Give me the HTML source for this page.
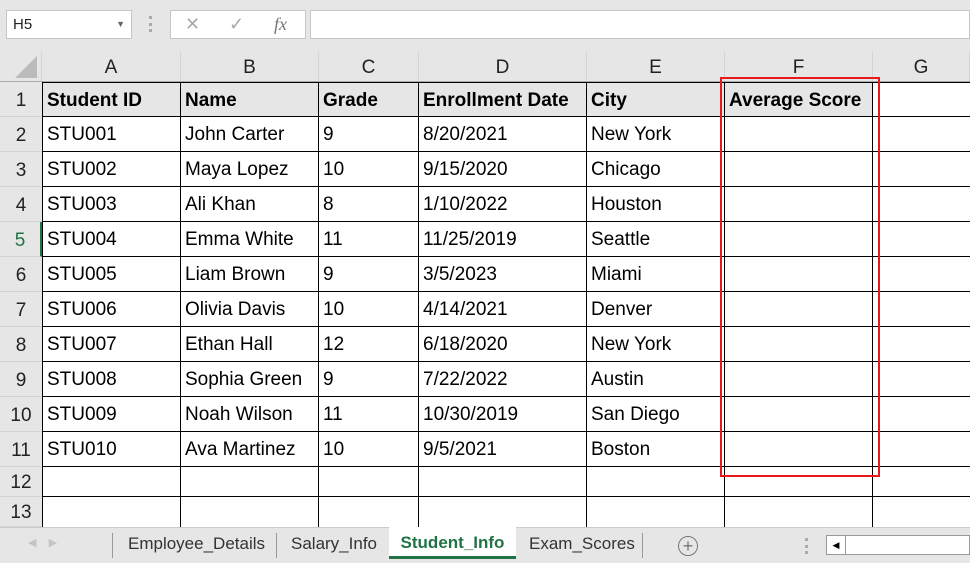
<!DOCTYPE html>
<html><head><meta charset="utf-8"><style>
body{margin:0;width:970px;height:563px;overflow:hidden;background:#fff;font-family:"Liberation Sans",Arial,sans-serif;position:relative}
.a{position:absolute;box-sizing:border-box}
.ch{position:absolute;top:52px;height:30px;text-align:center;font-size:19px;line-height:32px;color:#222;border-right:1px solid #d4d4d4;background:#e6e6e6;box-sizing:border-box}
.rh{position:absolute;left:0;width:42px;text-align:center;font-size:19px;color:#222;background:#e6e6e6;border-bottom:1px solid #d4d4d4;box-sizing:border-box}
.c{position:absolute;font-size:19px;color:#000;padding-left:4px;box-sizing:border-box;border-right:1px solid #000;border-bottom:1px solid #000;white-space:nowrap;overflow:hidden}
.b{font-weight:bold;background:#e6e6e6}
</style></head><body>
<div class="a" style="left:0;top:0;width:970px;height:52px;background:#e6e6e6"></div>
<div class="a" style="left:6px;top:10px;width:126px;height:29px;background:#fff;border:1px solid #c6c6c6;font-size:15px;line-height:27px;padding-left:6px;color:#222">H5<span style="position:absolute;right:6px;top:0;font-size:9px;color:#666">▼</span></div>
<div class="a" style="left:149px;top:16px;width:3px;height:16px;border-left:3px dotted #aaa"></div>
<div class="a" style="left:170px;top:10px;width:136px;height:29px;background:#fff;border:1px solid #c6c6c6;color:#aaa;font-size:18px;line-height:27px"><span style="position:absolute;left:14px">✕</span><span style="position:absolute;left:58px">✓</span><span style="position:absolute;left:103px;font-family:'Liberation Serif',serif;font-style:italic;color:#777">fx</span></div>
<div class="a" style="left:310px;top:10px;width:660px;height:29px;background:#fff;border:1px solid #c6c6c6"></div>
<div class="a" style="left:0;top:52px;width:42px;height:30px;background:#e6e6e6;border-right:1px solid #d4d4d4"><div style="position:absolute;right:4px;bottom:4px;width:0;height:0;border-left:22px solid transparent;border-bottom:22px solid #bbb"></div></div>
<div class="ch" style="left:42px;width:139px">A</div>
<div class="ch" style="left:181px;width:138px">B</div>
<div class="ch" style="left:319px;width:100px">C</div>
<div class="ch" style="left:419px;width:168px">D</div>
<div class="ch" style="left:587px;width:138px">E</div>
<div class="ch" style="left:725px;width:148px">F</div>
<div class="ch" style="left:873px;width:97px">G</div>
<div class="a" style="left:0;top:81px;width:970px;height:1px;background:#aaa"></div>
<div id="g"></div>
<script>
(function(){
var cols=[42,181,319,419,587,725,873,970];
var data=[["Student ID","Name","Grade","Enrollment Date","City","Average Score",""],
["STU001","John Carter","9","8/20/2021","New York","",""],
["STU002","Maya Lopez","10","9/15/2020","Chicago","",""],
["STU003","Ali Khan","8","1/10/2022","Houston","",""],
["STU004","Emma White","11","11/25/2019","Seattle","",""],
["STU005","Liam Brown","9","3/5/2023","Miami","",""],
["STU006","Olivia Davis","10","4/14/2021","Denver","",""],
["STU007","Ethan Hall","12","6/18/2020","New York","",""],
["STU008","Sophia Green","9","7/22/2022","Austin","",""],
["STU009","Noah Wilson","11","10/30/2019","San Diego","",""],
["STU010","Ava Martinez","10","9/5/2021","Boston","",""],
["","","","","","",""],["","","","","","",""]];
var h="";
for(var r=0;r<13;r++){var tp,ht;if(r<11){tp=82+35*r;ht=35}else{tp=467+30*(r-11);ht=30}
if(r==12){ht=527-tp;}
h+='<div class="rh" style="top:'+tp+'px;height:'+ht+'px;line-height:'+(ht+2)+'px;'+(r==4?'color:#217346;border-right:2px solid #217346':'')+'">'+(r+1)+'</div>';
for(var c=0;c<7;c++){var w=cols[c+1]-cols[c];
h+='<div class="c'+(r==0&&c<6?' b':'')+'" style="left:'+cols[c]+'px;top:'+tp+'px;width:'+w+'px;height:'+ht+'px;line-height:'+(ht+1)+'px;'+(c==0?'border-left:1px solid #000;':'')+(r==0?'border-top:1px solid #000;':'')+(c==6?'border-right:none;':'')+(r==12?'border-bottom:none;':'')+'">'+data[r][c]+'</div>';}}
document.getElementById('g').innerHTML=h;
})();
</script>
<div class="a" style="left:720px;top:77px;width:160px;height:400px;border:2px solid #e8191c"></div>
<div class="a" style="left:0;top:527px;width:970px;height:36px;background:#e6e6e6;border-top:1px solid #ccc"></div>
<div class="a" style="left:28px;top:536px;color:#c4c4c4;font-size:11px">◀ &nbsp;&nbsp; ▶</div>
<div class="a" style="left:112px;top:533px;height:25px;border-left:1px solid #999"></div>
<div class="a" style="left:128px;top:534px;font-size:17px;color:#333">Employee_Details</div>
<div class="a" style="left:276px;top:533px;height:25px;border-left:1px solid #999"></div>
<div class="a" style="left:291px;top:534px;font-size:17px;color:#333">Salary_Info</div>
<div class="a" style="left:389px;top:527px;width:127px;height:32px;background:#fff;border-bottom:3px solid #217346;font-size:17px;font-weight:bold;color:#217346;text-align:center;line-height:32px">Student_Info</div>
<div class="a" style="left:529px;top:534px;font-size:17px;color:#333">Exam_Scores</div>
<div class="a" style="left:642px;top:533px;height:25px;border-left:1px solid #999"></div>
<div class="a" style="left:678px;top:536px;width:20px;height:20px;border:1px solid #777;border-radius:50%;color:#777;font-size:18px;line-height:18px;text-align:center">+</div>
<div class="a" style="left:805px;top:538px;height:16px;border-left:3px dotted #aaa"></div>
<div class="a" style="left:826px;top:535px;width:144px;height:20px;background:#fff;border:1px solid #999"><div style="width:18px;height:18px;border-right:1px solid #999;font-size:9px;line-height:18px;text-align:center">◀</div></div>
</body></html>
